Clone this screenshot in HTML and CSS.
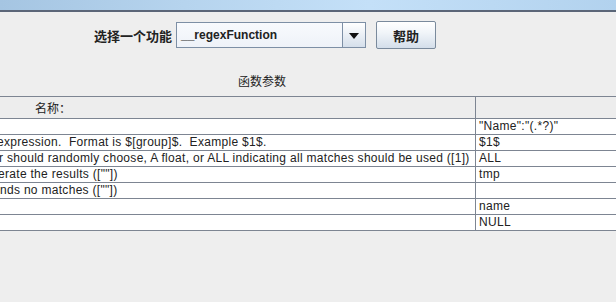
FILE: index.html
```html
<!DOCTYPE html>
<html lang="zh-CN">
<head>
  <meta charset="UTF-8">
  <title>函数助手</title>
  <link rel="stylesheet" href="styles.css">
</head>
<body>
  <div class="titlebar"></div>

  <div class="toolbar">
    <label class="fn-label" for="fn">选择一个功能</label>
    <div class="combo" id="fn">
      <span class="combo-text">__regexFunction</span>
      <span class="combo-arrow"></span>
    </div>
    <button class="help-btn">帮助</button>
  </div>

  <div class="caption">函数参数</div>

  <div class="params">
    <div class="row head">
      <div class="cell name">名称：</div>
      <div class="cell value"></div>
    </div>
    <div class="row">
      <div class="cell name"></div>
      <div class="cell value">"Name":"(.*?)"</div>
    </div>
    <div class="row">
      <div class="cell name cut-3">expression.&nbsp; Format is $[group]$.&nbsp; Example $1$.</div>
      <div class="cell value">$1$</div>
    </div>
    <div class="row">
      <div class="cell name cut-1">r should randomly choose, A float, or ALL indicating all matches should be used ([1])</div>
      <div class="cell value">ALL</div>
    </div>
    <div class="row">
      <div class="cell name cut-2">erate the results ([""])</div>
      <div class="cell value">tmp</div>
    </div>
    <div class="row">
      <div class="cell name">nds no matches ([""])</div>
      <div class="cell value"></div>
    </div>
    <div class="row">
      <div class="cell name"></div>
      <div class="cell value">name</div>
    </div>
    <div class="row">
      <div class="cell name"></div>
      <div class="cell value">NULL</div>
    </div>
  </div>
</body>
</html>
```

FILE: styles.css
```css
body {
  margin: 0;
  padding: 0;
  background-color: #eeeeee;
  font-family: Arial, "Liberation Sans", "Noto Sans CJK SC", sans-serif;
  font-size: 12px;
  color: #111;
  height: 302px;
  overflow: hidden;
}

.titlebar {
  height: 10px;
  background: linear-gradient(to right, #a5c5e2, #b6d4ee 30%, #c4e0f8 60%, #b2d2ee);
  border-bottom: 2px solid #5b6678;
}

.toolbar {
  display: flex;
  align-items: center;
  height: 46px;
  padding-left: 94px;
}

.fn-label {
  font-family: "Noto Sans CJK SC", sans-serif;
  font-size: 13px;
  font-weight: bold;
  color: #222;
  margin-right: 4px;
}

.combo {
  display: flex;
  width: 190px;
  height: 26px;
  box-sizing: border-box;
  border: 1px solid #7d8fa5;
  background: linear-gradient(#f8fafd, #eef2f8);
}

.combo-text {
  flex: 1;
  padding-left: 4px;
  line-height: 24px;
  font-family: "Liberation Sans", Arial, sans-serif;
  font-size: 12px;
  font-weight: bold;
  color: #222;
}

.combo-arrow {
  width: 22px;
  border-left: 1px solid #7d8fa5;
  background: linear-gradient(#ffffff, #d5dfeb);
  position: relative;
}

.combo-arrow::after {
  content: "";
  position: absolute;
  left: 6px;
  top: 10px;
  border-left: 5px solid transparent;
  border-right: 5px solid transparent;
  border-top: 6px solid #111;
}

.help-btn {
  margin-left: 10px;
  width: 60px;
  height: 28px;
  border: 1px solid #7a8a9c;
  border-radius: 2px;
  background: linear-gradient(#ffffff, #f1f5f9 40%, #d4deea);
  font-family: "Noto Sans CJK SC", sans-serif;
  font-size: 13px;
  font-weight: bold;
  color: #222;
  padding: 0;
}

.caption {
  height: 38px;
  box-sizing: border-box;
  padding-top: 6px;
  padding-right: 92px;
  display: flex;
  align-items: center;
  justify-content: center;
  font-family: "Noto Sans CJK SC", sans-serif;
  font-size: 12px;
  color: #222;
}

.params {
  border-top: 1px solid #7d8592;
  background-color: #efedf0;
}

.row {
  display: grid;
  grid-template-columns: 476px 1fr;
  height: 16px;
  box-sizing: border-box;
  border-bottom: 1px solid #7d8592;
  background-color: #ffffff;
}

.row.head {
  height: 22px;
  background-color: #ededed;
}

.cell {
  white-space: nowrap;
  overflow: hidden;
  line-height: 14px;
  letter-spacing: 0.3px;
  color: #222;
}

.cell.name {
  border-right: 1px solid #7d8592;
}

.cell.value {
  padding-left: 3px;
}

.head .cell.name {
  padding-left: 35px;
  line-height: 21px;
  letter-spacing: 0;
  font-family: "Noto Sans CJK SC", sans-serif;
}

.cut-1 { text-indent: -1px; }
.cut-2 { text-indent: -2px; }
.cut-3 { text-indent: -3px; }
```
